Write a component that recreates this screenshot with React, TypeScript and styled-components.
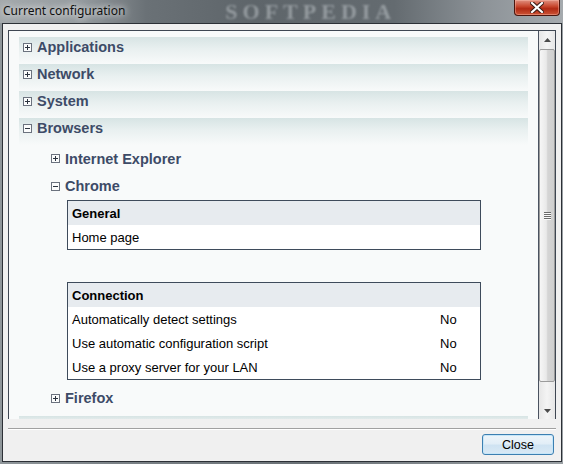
import styled, { createGlobalStyle } from "styled-components";

const GlobalStyle = createGlobalStyle`
  html, body {
    margin: 0;
    padding: 0;
    background: #8a9095;
  }
  * {
    box-sizing: border-box;
  }
`;

const Window = styled.div`
  width: 563px;
  height: 464px;
  display: flex;
  flex-direction: column;
  overflow: hidden;
  background: linear-gradient(90deg, #8f969a 0%, #7b8287 20%, #6a7176 55%, #9aa0a4 100%);
  font-family: "Liberation Sans", Arial, sans-serif;
`;

const TitleBar = styled.div`
  height: 23px;
  flex: none;
  display: flex;
  align-items: flex-start;
  overflow: hidden;
  background: linear-gradient(
    90deg,
    #a4a9ac 0%,
    #969ca0 14%,
    #6a7176 26%,
    #5e656a 45%,
    #646b70 70%,
    #8d9398 86%,
    #a5aaae 100%
  );
`;

const Title = styled.span`
  font-family: "Noto Sans", "Open Sans", sans-serif;
  font-size: 12px;
  line-height: 16px;
  padding: 3px 0 0 3px;
  color: #101010;
  text-shadow: 0 0 6px rgba(255, 255, 255, 0.9), 0 0 10px rgba(255, 255, 255, 0.6);
`;

const Watermark = styled.span`
  margin-left: 100px;
  font-family: "Liberation Serif", serif;
  font-weight: bold;
  font-size: 22px;
  line-height: 23px;
  letter-spacing: 5px;
  color: rgba(200, 205, 209, 0.5);
  filter: blur(1.3px);
`;

const CloseX = styled.button`
  margin-left: auto;
  margin-right: 3px;
  width: 46px;
  height: 16px;
  border: 1px solid #4a150d;
  border-top: none;
  border-radius: 0 0 4px 4px;
  background: linear-gradient(#e09080 0%, #c8482f 42%, #b12a14 58%, #cc5436 100%);
  box-shadow: inset 0 0 0 1px rgba(255, 200, 185, 0.4);
  display: flex;
  align-items: center;
  justify-content: center;
  padding: 0;
`;

const Client = styled.div`
  flex: 1;
  margin: 0 1px 2px 2px;
  border: 1px solid #2c3036;
  background: #f0f0f0;
  padding: 6px 5px 0 5px;
  display: flex;
  flex-direction: column;
`;

const Panel = styled.div`
  height: 389px;
  flex: none;
  display: flex;
  border: 1px solid #3e4652;
  border-bottom: none;
  background: #f8fafa;
`;

const Content = styled.div`
  flex: 1;
  overflow: hidden;
  padding: 6px 10px 0 10px;
  border-right: 1px solid #4a5260;
`;

const ScrollBar = styled.div`
  width: 16px;
  flex: none;
  display: flex;
  flex-direction: column;
  background: linear-gradient(90deg, #e6e6e6, #f4f4f4 50%, #e6e6e6);
`;

const Arrow = styled.div`
  height: 17px;
  flex: none;
  display: flex;
  align-items: center;
  justify-content: center;
`;

const Thumb = styled.div`
  margin: 1px 0 20px 0;
  flex: 1;
  border: 1px solid #9b9b9b;
  border-radius: 2px;
  background: linear-gradient(90deg, #f6f6f6 0%, #e9e9e9 45%, #d5d5d5 55%, #cfcfcf 100%);
  display: flex;
  align-items: center;
  justify-content: center;
`;

const Grip = styled.div`
  width: 7px;
  display: flex;
  flex-direction: column;
  gap: 1px;
  & > span {
    height: 1px;
    background: #6a6a6a;
    box-shadow: 0 1px 0 #f8f8f8;
  }
`;

const TopRow = styled.div<{ $cut?: boolean }>`
  height: ${(p) => (p.$cut ? "12px" : "27px")};
  display: flex;
  align-items: flex-start;
  gap: 5px;
  padding-left: 4px;
  background: linear-gradient(#d7e4e4 0%, #e9f0f0 45%, #f8fafa 100%);
`;

const SubRow = styled.div<{ $h: number }>`
  height: ${(p) => p.$h}px;
  display: flex;
  align-items: center;
  gap: 5px;
  padding-left: 32px;
`;

const Label = styled.span`
  font-family: "Liberation Sans", Arial, sans-serif;
  font-weight: bold;
  font-size: 14.5px;
  line-height: 20px;
  color: #3d4b67;
`;

const Box = styled.span<{ $top?: boolean }>`
  width: 9px;
  height: 9px;
  flex: none;
  margin-top: ${(p) => (p.$top ? "6px" : "0")};
  border: 1px solid #6b727e;
  background: #fbfcfc;
  position: relative;
  &::before {
    content: "";
    position: absolute;
    left: 1px;
    right: 1px;
    top: 3px;
    height: 1px;
    background: #2c3440;
  }
`;

const PlusBox = styled(Box)`
  &::after {
    content: "";
    position: absolute;
    top: 1px;
    bottom: 1px;
    left: 3px;
    width: 1px;
    background: #2c3440;
  }
`;

const Table = styled.div<{ $gap?: number }>`
  margin-left: 48px;
  margin-top: ${(p) => p.$gap ?? 0}px;
  width: 414px;
  border: 1px solid #3e4b5b;
  background: #ffffff;
`;

const HeadCell = styled.div`
  height: 24px;
  padding-left: 4px;
  display: flex;
  align-items: center;
  background: #e7ebef;
  font-weight: bold;
  font-size: 13px;
  color: #000;
`;

const Row = styled.div`
  height: 24px;
  display: grid;
  grid-template-columns: 1fr 40px;
  align-items: center;
  padding-left: 4px;
  font-size: 13px;
  color: #000;
`;

const Footer = styled.div`
  margin-top: 9px;
  border-top: 1px solid #a0a0a0;
  box-shadow: inset 0 1px 0 #ffffff;
  display: flex;
  justify-content: flex-end;
  padding: 5px 2px 0 0;
`;

const Button = styled.button`
  width: 72px;
  height: 21px;
  border: 1px solid #3c7fb1;
  border-radius: 3px;
  background: linear-gradient(#eef5fa 0%, #e2eef7 45%, #cfe3f2 55%, #d9e9f5 100%);
  box-shadow: inset 0 0 0 1px #c6e6f8;
  font-family: "Liberation Sans", Arial, sans-serif;
  font-size: 12.5px;
  color: #000;
  padding: 0;
`;

const UpIcon = () => (
  <svg width="7" height="4" viewBox="0 0 7 4">
    <path d="M0 4 L3.5 0 L7 4 Z" fill="#4a4a4a" />
  </svg>
);

const DownIcon = () => (
  <svg width="7" height="4" viewBox="0 0 7 4">
    <path d="M0 0 L3.5 4 L7 0 Z" fill="#4a4a4a" />
  </svg>
);

const XIcon = () => (
  <svg width="14" height="11" viewBox="0 0 14 11">
    <path
      d="M2 1 L12 10 M12 1 L2 10"
      stroke="#3a1a14"
      strokeWidth="4.2"
      strokeLinecap="square"
    />
    <path d="M2 1 L12 10 M12 1 L2 10" stroke="#ffffff" strokeWidth="2.2" strokeLinecap="square" />
  </svg>
);

const topItems = ["Applications", "Network", "System"];

const connection = [
  ["Automatically detect settings", "No"],
  ["Use automatic configuration script", "No"],
  ["Use a proxy server for your LAN", "No"],
];

export default function App() {
  return (
    <>
      <GlobalStyle />
      <Window>
        <TitleBar>
          <Title>Current configuration</Title>
          <Watermark>SOFTPEDIA</Watermark>
          <CloseX aria-label="Close window">
            <XIcon />
          </CloseX>
        </TitleBar>
        <Client>
          <Panel>
            <Content>
              {topItems.map((name) => (
                <TopRow key={name}>
                  <PlusBox $top />
                  <Label>{name}</Label>
                </TopRow>
              ))}
              <TopRow>
                <Box $top />
                <Label>Browsers</Label>
              </TopRow>
              <SubRow $h={27}>
                <PlusBox />
                <Label>Internet Explorer</Label>
              </SubRow>
              <SubRow $h={28}>
                <Box />
                <Label>Chrome</Label>
              </SubRow>
              <Table>
                <HeadCell>General</HeadCell>
                <Row>
                  <span>Home page</span>
                  <span />
                </Row>
              </Table>
              <Table $gap={32}>
                <HeadCell>Connection</HeadCell>
                {connection.map(([k, v]) => (
                  <Row key={k}>
                    <span>{k}</span>
                    <span>{v}</span>
                  </Row>
                ))}
              </Table>
              <SubRow $h={36}>
                <PlusBox />
                <Label>Firefox</Label>
              </SubRow>
              <TopRow $cut />
            </Content>
            <ScrollBar>
              <Arrow>
                <UpIcon />
              </Arrow>
              <Thumb>
                <Grip>
                  <span />
                  <span />
                  <span />
                  <span />
                </Grip>
              </Thumb>
              <Arrow>
                <DownIcon />
              </Arrow>
            </ScrollBar>
          </Panel>
          <Footer>
            <Button>Close</Button>
          </Footer>
        </Client>
      </Window>
    </>
  );
}
